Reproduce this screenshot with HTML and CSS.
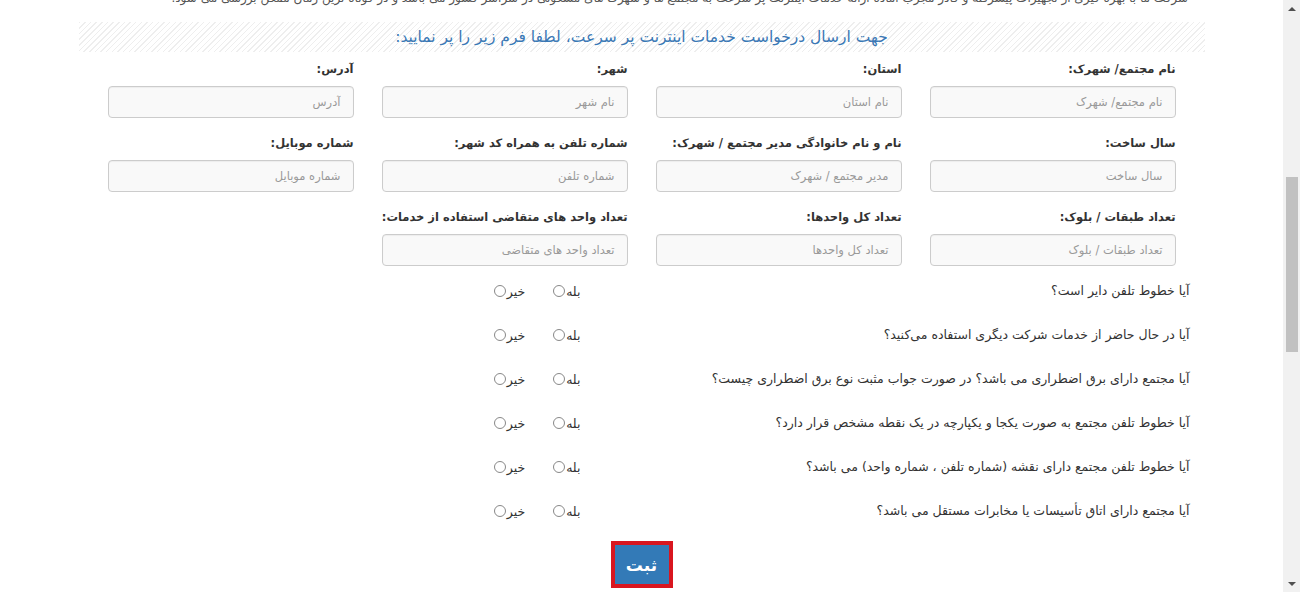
FILE: index.html
```html
<!DOCTYPE html>
<html lang="fa" dir="rtl">
<head>
  <meta charset="utf-8">
  <title>درخواست خدمات اینترنت پر سرعت</title>
  <link rel="stylesheet" href="styles.css">
</head>
<body>
  <div class="page">
    <div class="intro">
      <p>شرکت ما با بهره گیری از تجهیزات پیشرفته و کادر مجرب آماده ارائه خدمات اینترنت پر سرعت به مجتمع ها و شهرک های مسکونی در سراسر کشور می باشد و در کوتاه ترین زمان ممکن بررسی می شود.</p>
    </div>

    <div class="container">
      <h2 class="strip">جهت ارسال درخواست خدمات اینترنت پر سرعت، لطفا فرم زیر را پر نمایید:</h2>

      <form class="request">
        <div class="fields">
          <div class="field">
            <label>نام مجتمع/ شهرک:</label>
            <input type="text" placeholder="نام مجتمع/ شهرک">
          </div>
          <div class="field">
            <label>استان:</label>
            <input type="text" placeholder="نام استان">
          </div>
          <div class="field">
            <label>شهر:</label>
            <input type="text" placeholder="نام شهر">
          </div>
          <div class="field">
            <label>آدرس:</label>
            <input type="text" placeholder="آدرس">
          </div>

          <div class="field">
            <label>سال ساخت:</label>
            <input type="text" placeholder="سال ساخت">
          </div>
          <div class="field">
            <label>نام و نام خانوادگی مدیر مجتمع / شهرک:</label>
            <input type="text" placeholder="مدیر مجتمع / شهرک">
          </div>
          <div class="field">
            <label>شماره تلفن به همراه کد شهر:</label>
            <input type="text" placeholder="شماره تلفن">
          </div>
          <div class="field">
            <label>شماره موبایل:</label>
            <input type="text" placeholder="شماره موبایل">
          </div>

          <div class="field">
            <label>تعداد طبقات / بلوک:</label>
            <input type="text" placeholder="تعداد طبقات / بلوک">
          </div>
          <div class="field">
            <label>تعداد کل واحدها:</label>
            <input type="text" placeholder="تعداد کل واحدها">
          </div>
          <div class="field">
            <label>تعداد واحد های متقاضی استفاده از خدمات:</label>
            <input type="text" placeholder="تعداد واحد های متقاضی">
          </div>
        </div>

        <div class="questions">
          <div class="q">
            <p>آیا خطوط تلفن دایر است؟</p>
            <div class="opts">
              <label>بله<input type="radio" name="q1"></label>
              <label>خیر<input type="radio" name="q1"></label>
            </div>
          </div>
          <div class="q">
            <p>آیا در حال حاضر از خدمات شرکت دیگری استفاده می‌کنید؟</p>
            <div class="opts">
              <label>بله<input type="radio" name="q2"></label>
              <label>خیر<input type="radio" name="q2"></label>
            </div>
          </div>
          <div class="q">
            <p>آیا مجتمع دارای برق اضطراری می باشد؟ در صورت جواب مثبت نوع برق اضطراری چیست؟</p>
            <div class="opts">
              <label>بله<input type="radio" name="q3"></label>
              <label>خیر<input type="radio" name="q3"></label>
            </div>
          </div>
          <div class="q">
            <p>آیا خطوط تلفن مجتمع به صورت یکجا و یکپارچه در یک نقطه مشخص قرار دارد؟</p>
            <div class="opts">
              <label>بله<input type="radio" name="q4"></label>
              <label>خیر<input type="radio" name="q4"></label>
            </div>
          </div>
          <div class="q">
            <p>آیا خطوط تلفن مجتمع دارای نقشه (شماره تلفن ، شماره واحد) می باشد؟</p>
            <div class="opts">
              <label>بله<input type="radio" name="q5"></label>
              <label>خیر<input type="radio" name="q5"></label>
            </div>
          </div>
          <div class="q">
            <p>آیا مجتمع دارای اتاق تأسیسات یا مخابرات مستقل می باشد؟</p>
            <div class="opts">
              <label>بله<input type="radio" name="q6"></label>
              <label>خیر<input type="radio" name="q6"></label>
            </div>
          </div>
        </div>

        <div class="actions">
          <button type="button" class="btn">ثبت</button>
        </div>
      </form>
    </div>
  </div>

  <!-- نوار اسکرول صفحه -->
  <div class="scrollbar">
    <span class="arrow up"></span>
    <div class="track"><span class="thumb"></span></div>
    <span class="arrow down"></span>
  </div>
</body>
</html>
```

FILE: styles.css
```css
html, body { height: 100%; }
body {
  margin: 0;
  display: flex;
  direction: ltr;
  overflow: hidden;
  background: #fff;
  font-family: "DejaVu Sans", "Noto Sans", sans-serif;
  font-size: 13px;
  color: #333;
}

.page {
  flex: 1;
  direction: rtl;
}

/* خط بالای صفحه که نصفش بیرون است */
.intro {
  height: 9px;
  overflow: hidden;
}
.intro p {
  margin: -12px 0 0;
  padding-right: 95px;
  line-height: 20px;
  white-space: nowrap;
  overflow: hidden;
  color: #555;
  font-size: 12px;
}

.container {
  width: 1126px;
  margin: 0 auto;
}

.strip {
  margin: 13px 0 0;
  height: 30px;
  line-height: 30px;
  text-align: center;
  font-size: 15.5px;
  font-weight: normal;
  color: #3a78b5;
  background: repeating-linear-gradient(135deg, #eeeeee 0 1px, #ffffff 1px 4px);
}

.request {
  width: 1096px;
  margin: 0 auto;
}

.fields {
  display: grid;
  grid-template-columns: repeat(4, 274px);
  row-gap: 15px;
  margin-top: 7px;
}
.field { padding: 0 14px; }
.field label {
  display: block;
  line-height: 20px;
  margin-bottom: 7px;
  font-weight: bold;
  font-size: 11.5px;
  white-space: nowrap;
}
.field input {
  display: block;
  box-sizing: border-box;
  width: 100%;
  height: 32px;
  padding: 6px 12px;
  border: 1px solid #cccccc;
  border-radius: 4px;
  background: #f9f9f9;
  box-shadow: inset 0 1px 1px rgba(0,0,0,.05);
  font-family: inherit;
  font-size: 11.5px;
  color: #555;
}
.field input::placeholder { color: #999; }

.questions { margin-top: 3px; }
.q {
  display: flex;
  align-items: center;
  height: 44px;
}
.q p {
  width: 548px;
  margin: 0;
  line-height: 20px;
  font-size: 12.5px;
}
.opts {
  display: flex;
  gap: 28px;
  padding-right: 61px;
}
.opts label {
  display: flex;
  align-items: center;
  gap: 1px;
  font-size: 12.5px;
}
.opts input {
  appearance: none;
  width: 12px;
  height: 12px;
  margin: 0;
  border: 1px solid #888;
  border-radius: 50%;
  background: #fff;
}

.actions {
  display: flex;
  justify-content: center;
  margin-top: 8px;
}
.btn {
  width: 62px;
  height: 47px;
  border: 4px solid #d9161f;
  background: #337ab7;
  color: #fff;
  font-family: inherit;
  font-size: 17px;
  font-weight: bold;
  padding: 0;
}

/* scrollbar */
.scrollbar {
  width: 17px;
  display: flex;
  flex-direction: column;
  background: #f1f1f1;
}
.arrow {
  height: 17px;
  display: flex;
  align-items: center;
  justify-content: center;
}
.arrow::before {
  content: "";
  border-left: 4px solid transparent;
  border-right: 4px solid transparent;
}
.arrow.up::before { border-bottom: 4px solid #505050; }
.arrow.down::before { border-top: 4px solid #505050; }
.track { flex: 1; }
.thumb {
  display: block;
  width: 12px;
  height: 175px;
  margin: 160px auto 0;
  background: #c1c1c1;
}
```
